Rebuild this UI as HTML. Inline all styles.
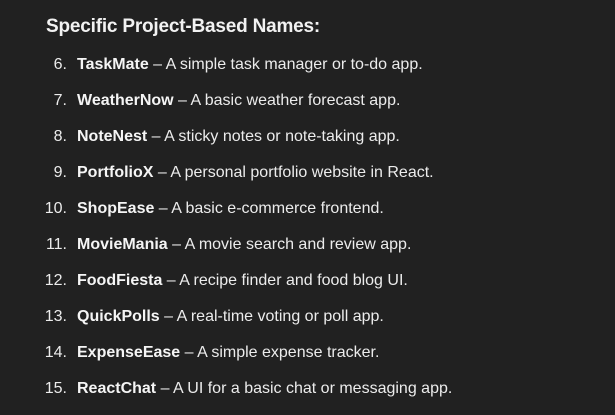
<!DOCTYPE html>
<html><head><style>
body{margin:0;background:#212121;width:615px;height:415px;overflow:hidden;font-family:"Liberation Sans",sans-serif;color:#ececec}
h3{position:absolute;left:46px;top:16px;margin:0;font-size:19px;font-weight:bold;color:#f2f2f2;letter-spacing:-0.2px}
.it{position:absolute;left:0;height:20px;line-height:20px;font-size:16px;white-space:nowrap}
.n{position:absolute;right:548px;width:40px;text-align:right}
.t{position:absolute;left:77px}
b{font-weight:bold;color:#f5f5f5}
</style></head><body>
<h3>Specific Project-Based Names:</h3>
<div class="it" style="top:55px;width:615px"><span class="n">6.</span><span class="t"><b>TaskMate</b> – A simple task manager or to-do app.</span></div>
<div class="it" style="top:91px;width:615px"><span class="n">7.</span><span class="t"><b>WeatherNow</b> – A basic weather forecast app.</span></div>
<div class="it" style="top:127px;width:615px"><span class="n">8.</span><span class="t"><b>NoteNest</b> – A sticky notes or note-taking app.</span></div>
<div class="it" style="top:163px;width:615px"><span class="n">9.</span><span class="t"><b>PortfolioX</b> – A personal portfolio website in React.</span></div>
<div class="it" style="top:199px;width:615px"><span class="n">10.</span><span class="t"><b>ShopEase</b> – A basic e-commerce frontend.</span></div>
<div class="it" style="top:235px;width:615px"><span class="n">11.</span><span class="t"><b>MovieMania</b> – A movie search and review app.</span></div>
<div class="it" style="top:271px;width:615px"><span class="n">12.</span><span class="t"><b>FoodFiesta</b> – A recipe finder and food blog UI.</span></div>
<div class="it" style="top:307px;width:615px"><span class="n">13.</span><span class="t"><b>QuickPolls</b> – A real-time voting or poll app.</span></div>
<div class="it" style="top:343px;width:615px"><span class="n">14.</span><span class="t"><b>ExpenseEase</b> – A simple expense tracker.</span></div>
<div class="it" style="top:379px;width:615px"><span class="n">15.</span><span class="t"><b>ReactChat</b> – A UI for a basic chat or messaging app.</span></div>
</body></html>
